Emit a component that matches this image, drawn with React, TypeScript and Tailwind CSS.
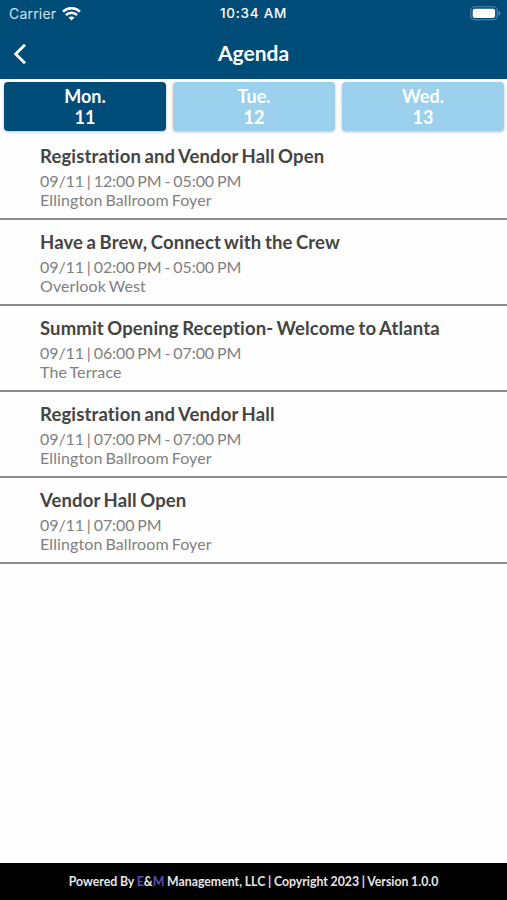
const days = [
  { day: 'Mon.', date: '11', active: true },
  { day: 'Tue.', date: '12', active: false },
  { day: 'Wed.', date: '13', active: false },
];

const sessions = [
  { title: 'Registration and Vendor Hall Open', time: '09/11 | 12:00 PM - 05:00 PM', place: 'Ellington Ballroom Foyer' },
  { title: 'Have a Brew, Connect with the Crew', time: '09/11 | 02:00 PM - 05:00 PM', place: 'Overlook West' },
  { title: 'Summit Opening Reception- Welcome to Atlanta', time: '09/11 | 06:00 PM - 07:00 PM', place: 'The Terrace' },
  { title: 'Registration and Vendor Hall', time: '09/11 | 07:00 PM - 07:00 PM', place: 'Ellington Ballroom Foyer' },
  { title: 'Vendor Hall Open', time: '09/11 | 07:00 PM', place: 'Ellington Ballroom Foyer' },
];

function StatusBar() {
  return (
    <div className="grid h-[27px] grid-cols-3 items-center font-['Inter',sans-serif] text-white">
      <div className="flex items-center gap-[6px] pl-[9px]">
        <span className="text-[14px] leading-none tracking-[0.2px] text-[#d3e2ec]">Carrier</span>
        <svg width="19" height="14" viewBox="0 0 19 14" fill="none" stroke="white" strokeWidth="2.6">
          <path d="M1 4.6C5.8 0 13.2 0 18 4.6" />
          <path d="M4 8c3.1-3 7.9-3 11 0" />
          <path d="M6.5 10.6c1.7-1.6 4.3-1.6 6 0l-3 2.8z" fill="white" stroke="none" />
        </svg>
      </div>
      <span className="text-center text-[13.5px] font-medium leading-none tracking-[0.75px] whitespace-nowrap">10:34 AM</span>
      <svg className="mr-[6px] justify-self-end" width="31" height="15" viewBox="0 0 31 15">
        <rect x="0.8" y="0.8" width="26.4" height="13" rx="3.8" fill="none" stroke="#5288aa" strokeWidth="1.1" />
        <rect x="2.7" y="2.7" width="22.4" height="9.2" rx="2" fill="white" />
        <path d="M28.6 5v4.6c2.3-.8 2.3-3.8 0-4.6z" fill="#6f9ab7" />
      </svg>
    </div>
  );
}

export default function App() {
  return (
    <div className="flex h-[900px] w-[507px] flex-col overflow-hidden bg-[#fefefe] font-['Lato',sans-serif] [font-variant-ligatures:none]">
      <header className="h-[79px] shrink-0 bg-[#004c79]">
        <StatusBar />
        <div className="grid h-[52px] grid-cols-3 items-center">
          <svg className="mt-px ml-[13px]" width="14" height="22" viewBox="0 0 14 22" fill="none" stroke="white" strokeWidth="2.8">
            <path d="M12 1.8 2.7 11 12 20.2" />
          </svg>
          <h1 className="pb-[2px] text-center text-[21px] font-bold leading-none text-white">Agenda</h1>
        </div>
      </header>

      <nav className="grid h-[55px] shrink-0 grid-cols-3 gap-[7px] pt-[3px] pr-[3px] pb-[3px] pl-[4px]">
        {days.map((d) => (
          <button
            key={d.date}
            className={`flex flex-col items-center justify-center rounded-[4px] text-[18px] font-bold leading-[21px] text-white shadow-[0_1px_3px_rgba(0,0,0,0.25)] ${d.active ? 'bg-[#004c79]' : 'bg-[#9bd1ec]'}`}
          >
            <span>{d.day}</span>
            <span>{d.date}</span>
          </button>
        ))}
      </nav>

      <main className="flex-1">
        {sessions.map((s) => (
          <article key={s.title} className="h-[86px] border-b-2 border-[#8b8b8b] pt-[10px] pl-[40px] whitespace-nowrap">
            <h2 className="text-[18.5px] font-bold leading-[24px] tracking-[0.14px] text-[#444444] [word-spacing:-1.2px]">{s.title}</h2>
            <p className="mt-[3px] text-[16px] leading-[19px] tracking-[-0.08px] text-[#808080] [word-spacing:-1.1px]">{s.time}</p>
            <p className="text-[16px] leading-[19px] tracking-[0.1px] text-[#808080] [word-spacing:-1.2px]">{s.place}</p>
          </article>
        ))}
      </main>

      <footer className="flex h-[37px] shrink-0 items-center justify-center bg-black pt-[2px] text-[12.3px] font-bold text-[#e6e6e6]">
        <p className="whitespace-nowrap [word-spacing:-0.3px]">
          Powered By <span className="text-[#5b4db0]">E</span>&amp;<span className="text-[#5b4db0]">M</span> Management, LLC | Copyright 2023 | Version 1.0.0
        </p>
      </footer>
    </div>
  );
}
